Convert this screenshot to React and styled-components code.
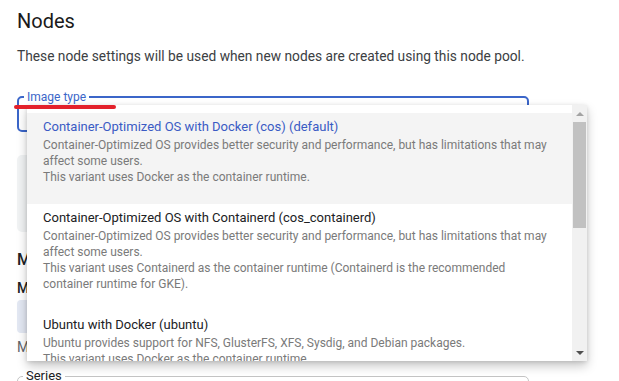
import React from 'react';
import styled, { createGlobalStyle } from 'styled-components';

const GlobalStyle = createGlobalStyle`
  html, body {
    margin: 0;
    padding: 0;
    background: #ffffff;
    font-family: Roboto, "Liberation Sans", Arial, sans-serif;
    -webkit-font-smoothing: antialiased;
  }
`;

const imageOptions = [
  {
    title: 'Container-Optimized OS with Docker (cos) (default)',
    lines: [
      'Container-Optimized OS provides better security and performance, but has limitations that may',
      'affect some users.',
      'This variant uses Docker as the container runtime.',
    ],
    selected: true,
  },
  {
    title: 'Container-Optimized OS with Containerd (cos_containerd)',
    lines: [
      'Container-Optimized OS provides better security and performance, but has limitations that may',
      'affect some users.',
      'This variant uses Containerd as the container runtime (Containerd is the recommended',
      'container runtime for GKE).',
    ],
  },
  {
    title: 'Ubuntu with Docker (ubuntu)',
    lines: [
      'Ubuntu provides support for NFS, GlusterFS, XFS, Sysdig, and Debian packages.',
      'This variant uses Docker as the container runtime.',
    ],
  },
];

const App = () => {
  return (
    <Page>
      <GlobalStyle />
      <Content>
        <Heading>Nodes</Heading>
        <Intro>These node settings will be used when new nodes are created using this node pool.</Intro>

        <Field $active>
          <Legend $active>Image type</Legend>
          <FieldValue>Container-Optimized OS with Docker (cos) (default)</FieldValue>
        </Field>

        <InfoBox />

        <SectionTitle>Machine configuration</SectionTitle>
        <SubTitle>Machine family</SubTitle>
        <ToggleGroup>
          <ToggleButton $on>General-purpose</ToggleButton>
          <ToggleButton>Compute-optimized</ToggleButton>
          <ToggleButton>Memory-optimized</ToggleButton>
        </ToggleGroup>
        <Helper>Machine types for common workloads, optimized for cost and flexibility</Helper>

        <Field>
          <Legend>Series</Legend>
          <FieldValue>N1</FieldValue>
        </Field>
      </Content>

      {/* annotation stroke under the label */}
      <Marker />

      <Menu>
        <OptionList>
          {imageOptions.map((opt) => (
            <Option key={opt.title} $selected={opt.selected}>
              <OptionTitle $selected={opt.selected}>{opt.title}</OptionTitle>
              {opt.lines.map((line) => (
                <OptionLine key={line}>{line}</OptionLine>
              ))}
            </Option>
          ))}
        </OptionList>
        <ScrollBar>
          <Arrow $up />
          <Thumb />
          <ScrollSpace />
          <Arrow />
        </ScrollBar>
      </Menu>
    </Page>
  );
};

const Page = styled.div`
  position: relative;
  width: 619px;
  height: 381px;
  overflow: hidden;
  background: #fff;
`;

const Content = styled.div`
  width: 512px;
  margin-left: 17px;
  padding-top: 8px;
  display: flex;
  flex-direction: column;
`;

const Heading = styled.h1`
  margin: 0;
  font-size: 20px;
  line-height: 26px;
  font-weight: 400;
  color: #1a1a1a;
`;

const Intro = styled.p`
  margin: 12px 0 0;
  font-size: 13.75px;
  line-height: 20px;
  white-space: nowrap;
  color: #3c4043;
`;

const Field = styled.fieldset`
  margin: ${(p) => (p.$active ? '24px 0 0' : '12px 0 0')};
  padding: 14px 8px 0 5px;
  height: ${(p) => (p.$active ? '42px' : '48px')};
  border: ${(p) => (p.$active ? '2px solid #3b66c9' : '1px solid #c4c4c4')};
  border-radius: 5px;
  box-sizing: border-box;
  min-width: 0;
`;

const Legend = styled.legend`
  margin-left: 0;
  padding: 0 3px;
  font-size: ${(p) => (p.$active ? '12px' : '13px')};
  line-height: 14px;
  color: ${(p) => (p.$active ? '#3b66c9' : '#202124')};
`;

const FieldValue = styled.div`
  padding-left: 3px;
  font-size: 14px;
  line-height: 20px;
  color: #202124;
`;

const InfoBox = styled.div`
  margin-top: 23px;
  height: 77px;
  border-radius: 5px;
  background: #f1f3f4;
`;

const SectionTitle = styled.h2`
  margin: 16px 0 0;
  font-size: 16px;
  line-height: 24px;
  font-weight: 500;
  color: #202124;
`;

const SubTitle = styled.h3`
  margin: 8px 0 0;
  font-size: 14px;
  line-height: 16px;
  font-weight: 500;
  color: #202124;
`;

const ToggleGroup = styled.div`
  margin-top: 4px;
  display: flex;
  height: 33px;
  border-radius: 4px;
  overflow: hidden;
`;

const ToggleButton = styled.div`
  flex: 1;
  display: flex;
  align-items: center;
  justify-content: center;
  font-size: 12px;
  text-transform: uppercase;
  background: ${(p) => (p.$on ? '#e3e8f3' : '#ffffff')};
  color: ${(p) => (p.$on ? '#3b66c9' : '#5f6368')};
`;

const Helper = styled.div`
  margin-top: 4px;
  font-size: 14px;
  line-height: 20px;
  white-space: nowrap;
  color: #5f6368;
`;

const Marker = styled.div`
  position: absolute;
  left: 14px;
  top: 105px;
  width: 102px;
  height: 4px;
  border-radius: 2px;
  background: #e3212b;
  z-index: 3;
`;

const Menu = styled.div`
  position: absolute;
  left: 27px;
  top: 105px;
  width: 560px;
  height: 256px;
  display: flex;
  background: #fff;
  box-shadow: 0 5px 10px rgba(0, 0, 0, 0.22), 0 1px 4px rgba(0, 0, 0, 0.12);
  z-index: 2;
`;

const OptionList = styled.div`
  flex: 1;
  padding-top: 8px;
  overflow: hidden;
`;

const Option = styled.div`
  padding: 4px 16px 19px;
  background: ${(p) => (p.$selected ? '#f4f4f4' : '#ffffff')};
`;

const OptionTitle = styled.div`
  font-size: 13px;
  line-height: 20px;
  white-space: nowrap;
  color: ${(p) => (p.$selected ? '#3a5bc4' : '#202124')};
`;

const OptionLine = styled.div`
  font-size: 12px;
  line-height: 16px;
  white-space: nowrap;
  color: #7a7a7a;
`;

const ScrollBar = styled.div`
  width: 15px;
  display: flex;
  flex-direction: column;
  align-items: center;
  background: #f1f1f1;
`;

const Arrow = styled.div`
  flex: none;
  height: 17px;
  width: 15px;
  display: flex;
  align-items: center;
  justify-content: center;

  &::after {
    content: '';
    border-left: 4px solid transparent;
    border-right: 4px solid transparent;
    ${(p) =>
      p.$up
        ? 'border-bottom: 4px solid #a3a3a3;'
        : 'border-top: 4px solid #505050;'}
  }
`;

const Thumb = styled.div`
  flex: none;
  width: 13px;
  height: 106px;
  background: #c1c1c1;
`;

const ScrollSpace = styled.div`
  flex: 1;
`;

export default App;
